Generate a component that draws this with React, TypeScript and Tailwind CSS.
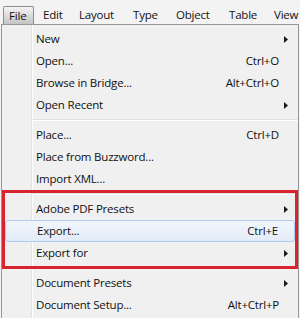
type Item =
  | { kind: "item"; label: string; shortcut?: string; submenu?: boolean; active?: boolean }
  | { kind: "sep" };

const menuBar = [
  { label: "Edit", w: "w-[36px]" },
  { label: "Layout", w: "w-[54px]" },
  { label: "Type", w: "w-[43px]" },
  { label: "Object", w: "w-[53px]" },
  { label: "Table", w: "w-[45px]" },
  { label: "View", w: "w-[40px]" },
];

const items: Item[] = [
  { kind: "item", label: "New", submenu: true },
  { kind: "item", label: "Open...", shortcut: "Ctrl+O" },
  { kind: "item", label: "Browse in Bridge...", shortcut: "Alt+Ctrl+O" },
  { kind: "item", label: "Open Recent", submenu: true },
  { kind: "sep" },
  { kind: "item", label: "Place...", shortcut: "Ctrl+D" },
  { kind: "item", label: "Place from Buzzword..." },
  { kind: "item", label: "Import XML..." },
  { kind: "sep" },
  { kind: "item", label: "Adobe PDF Presets", submenu: true },
  { kind: "item", label: "Export...", shortcut: "Ctrl+E", active: true },
  { kind: "item", label: "Export for", submenu: true },
  { kind: "sep" },
  { kind: "item", label: "Document Presets", submenu: true },
  { kind: "item", label: "Document Setup...", shortcut: "Alt+Ctrl+P" },
];

function Arrow() {
  return (
    <svg width="4" height="7" viewBox="0 0 4 7" className="block">
      <polygon points="0,0 4,3.5 0,7" fill="#1a1a1a" />
    </svg>
  );
}

function MenuRow({ item }: { item: Extract<Item, { kind: "item" }> }) {
  return (
    <div
      className={`relative mx-[3px] flex h-[22px] items-center pl-[31px] ${
        item.active
          ? "rounded-[3px] border border-[#aeccf0] bg-gradient-to-b from-[#f2f6fc] to-[#e2ebf7] pl-[30px]"
          : ""
      }`}
    >
      <span className="flex-1 whitespace-nowrap">{item.label}</span>
      {item.shortcut && <span className="whitespace-nowrap">{item.shortcut}</span>}
      <span className={`flex w-[16px] items-center pl-[5px] ${item.active ? "w-[15px]" : ""}`}>
        {item.submenu && <Arrow />}
      </span>
    </div>
  );
}

export default function App() {
  return (
    <div
      className="relative h-[318px] w-[300px] overflow-hidden bg-[#f3f3f3] text-[11.5px] tracking-[-0.2px] text-[#111]"
      style={{ fontFamily: '"Segoe UI", "Open Sans", "Noto Sans", sans-serif' }}
    >
      {/* menu bar */}
      <div className="flex h-[24px] items-end">
        <div className="ml-[3px] flex h-[18px] w-[31px] shrink-0 items-center rounded-t-[2px] border border-b-0 border-[#8c8c8c] bg-gradient-to-b from-[#f4f4f4] to-[#c4c4c4] pl-[5px]">
          File
        </div>
        {menuBar.map((m) => (
          <div key={m.label} className={`${m.w} flex h-[18px] shrink-0 items-center pl-[9px]`}>
            {m.label}
          </div>
        ))}
      </div>

      {/* file menu */}
      <div className="relative ml-[1px] w-[298px] border-x border-t border-[#979797] bg-[#f0f0f0] pt-[3px] pb-4">
        <div className="absolute top-0 bottom-0 left-[29px] w-[2px] border-l border-[#e2e3e3] bg-white" />
        {items.map((it, i) =>
          it.kind === "sep" ? (
            <div key={i} className="relative flex h-[8px] flex-col pt-[3px] pl-[30px]">
              <div className="h-px bg-[#e0e0e0]" />
              <div className="h-px bg-white" />
            </div>
          ) : (
            <MenuRow key={i} item={it} />
          )
        )}
      </div>

      {/* red highlight frame */}
      <div className="absolute top-[190px] left-[2px] h-[79px] w-[296px] border-[3px] border-[#d9232e]" />
    </div>
  );
}
